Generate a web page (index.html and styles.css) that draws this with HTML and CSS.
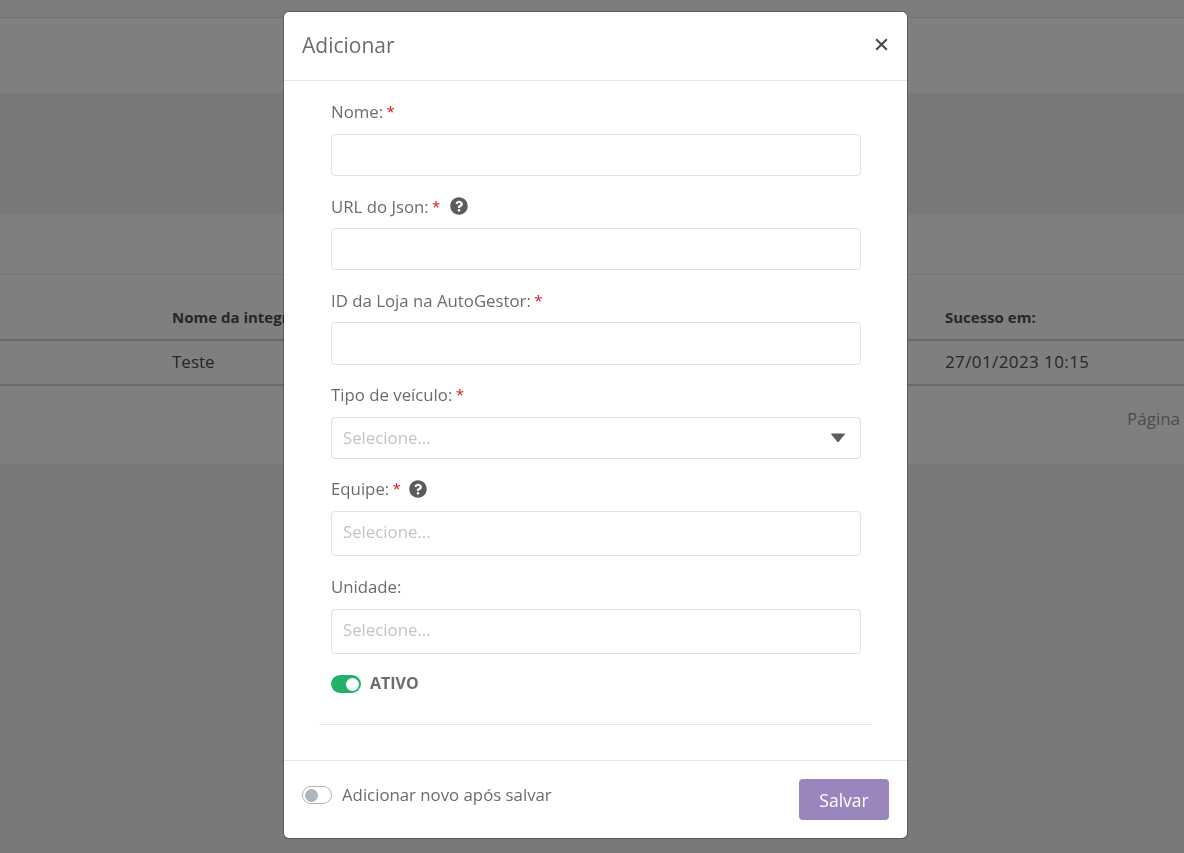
FILE: index.html
```html
<!DOCTYPE html>
<html lang="pt-BR">
<head>
<meta charset="utf-8">
<title>Adicionar</title>
<link rel="stylesheet" href="styles.css">
</head>
<body>
<div class="page">
  <div class="topbar"></div>
  <div class="band"></div>
  <section class="card">
    <div class="card-head"></div>
    <div class="table-row table-head"><span>Nome da integração</span><span>Sucesso em:</span></div>
    <div class="table-row table-body"><span>Teste</span><span class="date">27/01/2023 10:15</span></div>
    <div class="pager">Página</div>
  </section>
</div>
<div class="overlay">
  <div class="modal">
    <header class="modal-head">
      <h2 class="modal-title">Adicionar</h2>
      <svg class="close" width="13" height="13" viewBox="0 0 13 13"><path d="M1.2 1.2 11.8 11.8M11.8 1.2 1.2 11.8"/></svg>
    </header>
    <div class="modal-body">
      <div class="form">
        <div class="group">
          <label class="label">Nome: <i class="req">*</i></label>
          <div class="input"></div>
        </div>
        <div class="group">
          <label class="label">URL do Json: <i class="req">*</i>
            <svg class="help" width="18" height="18" viewBox="0 0 512 512"><path fill-rule="evenodd" d="M504 256c0 137-111 248-248 248S8 393 8 256C8 119 119 8 256 8s248 111 248 248zM263 110c-48 0-78 20-102 56-4 5-2 12 3 16l30 22c5 4 12 3 16-2 15-19 26-31 50-31 18 0 40 11 40 29 0 13-11 20-28 30-21 12-48 26-48 62v8c0 6 5 11 11 11h48c6 0 11-5 11-11v-3c0-25 73-26 73-92 0-50-52-95-104-95zM256 338c-21 0-38 17-38 38s17 38 38 38 38-17 38-38-17-38-38-38z"/></svg>
          </label>
          <div class="input"></div>
        </div>
        <div class="group">
          <label class="label">ID da Loja na AutoGestor: <i class="req">*</i></label>
          <div class="input"></div>
        </div>
        <div class="group">
          <label class="label">Tipo de veículo: <i class="req">*</i></label>
          <div class="input select">
            <span class="placeholder">Selecione...</span>
            <svg class="caret" width="16" height="10" viewBox="0 0 16 10"><path d="M1.5 1h13L8 9z"/></svg>
          </div>
        </div>
        <div class="group group-team">
          <label class="label">Equipe: <i class="req">*</i>
            <svg class="help help-team" width="18" height="18" viewBox="0 0 512 512"><path fill-rule="evenodd" d="M504 256c0 137-111 248-248 248S8 393 8 256C8 119 119 8 256 8s248 111 248 248zM263 110c-48 0-78 20-102 56-4 5-2 12 3 16l30 22c5 4 12 3 16-2 15-19 26-31 50-31 18 0 40 11 40 29 0 13-11 20-28 30-21 12-48 26-48 62v8c0 6 5 11 11 11h48c6 0 11-5 11-11v-3c0-25 73-26 73-92 0-50-52-95-104-95zM256 338c-21 0-38 17-38 38s17 38 38 38 38-17 38-38-17-38-38-38z"/></svg>
          </label>
          <div class="input select tall"><span class="placeholder">Selecione...</span></div>
        </div>
        <div class="group">
          <label class="label">Unidade:</label>
          <div class="input select tall"><span class="placeholder">Selecione...</span></div>
        </div>
        <div class="switch-row">
          <span class="switch on"></span>
          <strong class="switch-label">ATIVO</strong>
        </div>
      </div>
      <hr class="rule">
    </div>
    <footer class="modal-foot">
      <div class="foot-check">
        <span class="switch off"></span>
        <span class="foot-label">Adicionar novo após salvar</span>
      </div>
      <button class="save" type="button">Salvar</button>
    </footer>
  </div>
</div>
</body>
</html>
```
FILE: styles.css
```css
* { box-sizing: border-box; }
html, body { margin: 0; height: 100%; }
body {
  font-family: "Open Sans", "Noto Sans", sans-serif;
  font-size: 16.8px;
  color: #6c6c6c;
  background: #f0f4f2;
  overflow: hidden;
}
.page { height: 853px; overflow: hidden; }
.topbar { height: 18px; background: #f8f8f8; border-bottom: 1px solid #e6e6e6; }
.band { height: 75px; background: #fff; margin-bottom: 121px; }
.card { background: #fff; height: 250px; }
.card-head { height: 61px; border-bottom: 1px solid #e8e8e8; }
.table-row {
  display: grid;
  grid-template-columns: 773px 1fr;
  padding-left: 172px;
  color: #4e4e4e;
}
.table-head {
  height: 66px;
  align-items: end;
  padding-bottom: 12px;
  border-bottom: 2px solid #d4d4d4;
  font-size: 15px;
  font-weight: 700;
}
.table-body {
  height: 45px;
  align-items: center;
  padding-bottom: 2px;
  border-bottom: 2px solid #d4d4d4;
  font-size: 17px;
}
.date { letter-spacing: .4px; }
.pager {
  padding: 21px 0 0 1127px;
  white-space: nowrap;
  color: #999;
  font-size: 17px;
}
.overlay {
  position: fixed;
  inset: 0;
  background: rgba(0, 0, 0, .5);
  display: flex;
  justify-content: center;
  align-items: flex-start;
  padding-top: 12px;
}
.modal {
  width: 623px;
  height: 826px;
  background: #fff;
  border-radius: 5px;
  box-shadow: 0 0 0 1px rgba(0, 0, 0, .25);
  display: flex;
  flex-direction: column;
  margin-left: 7px;
}
.modal-head {
  height: 69px;
  flex: none;
  display: flex;
  align-items: center;
  justify-content: space-between;
  padding: 0 19px 0 18px;
  border-bottom: 1px solid #e2e5ea;
}
.modal-title { margin: -2px 0 0; font-size: 21px; font-weight: 400; color: #6c6c6c; }
.close { fill: none; stroke: #4a4a4a; stroke-width: 2.1; margin-top: -3px; }
.modal-body { flex: 1; padding: 18px 35px 0; }
.form { padding: 0 11px 0 12px; }
.group { margin-bottom: 18px; }
.group-team { margin-bottom: 18.1px; }
.label {
  display: flex;
  align-items: center;
  height: 24px;
  margin-bottom: 11px;
  white-space: pre;
}
.group:not(:first-child) .label { margin-bottom: 10px; padding-top: 0; }
.group:not(:first-child) { margin-top: 0; }
.req { color: #e0101e; font-style: normal; font-size: 15px; margin: -1px 0 0 -1px; }
.help { fill: #5c5c5c; margin-left: 10px; }
.help-team { margin-left: 8px; }
.input {
  height: 42.2px;
  border: 1px solid #e1e1e1;
  border-radius: 4px;
  background: #fff;
}
.select {
  display: flex;
  align-items: center;
  justify-content: space-between;
  padding: 0 14px 0 11px;
}
.tall { height: 45.67px; }
.placeholder { color: #c4c4c4; }
.tall .placeholder { margin-top: -4px; }
.caret { fill: #5c5c5c; stroke: #5c5c5c; stroke-width: 1; stroke-linejoin: round; }
.switch-row { display: flex; align-items: center; gap: 9px; margin-top: 21px; height: 18px; }
.switch {
  display: block;
  position: relative;
  width: 30px;
  height: 18px;
  border-radius: 9px;
  flex: none;
}
.switch::after {
  content: "";
  position: absolute;
  top: 2.5px;
  width: 13px;
  height: 13px;
  border-radius: 50%;
}
.on { background: #22b26b; }
.on::after { right: 2.5px; background: #fff; }
.off { border: 1px solid #adb5bd; background: #fff; }
.off::after { left: 1.5px; top: 1.5px; background: #adb5bd; }
.switch-label { font-size: 16px; font-weight: 700; color: #6c6c6c; margin-top: -3px; }
.rule { border: 0; border-top: 1px solid #e2e5ea; margin: 31px 0 0; }
.modal-foot {
  flex: none;
  height: 78px;
  display: flex;
  justify-content: space-between;
  align-items: flex-start;
  padding: 18px;
  border-top: 1px solid #e2e5ea;
}
.foot-check { display: flex; align-items: center; gap: 10px; margin-top: 7px; height: 18px; }
.foot-label { margin-top: -2px; }
.save {
  width: 90px;
  height: 41px;
  border: 0;
  border-radius: 4px;
  background: #9b85bd;
  color: #fff;
  font: inherit;
  font-size: 17.5px;
}
```
